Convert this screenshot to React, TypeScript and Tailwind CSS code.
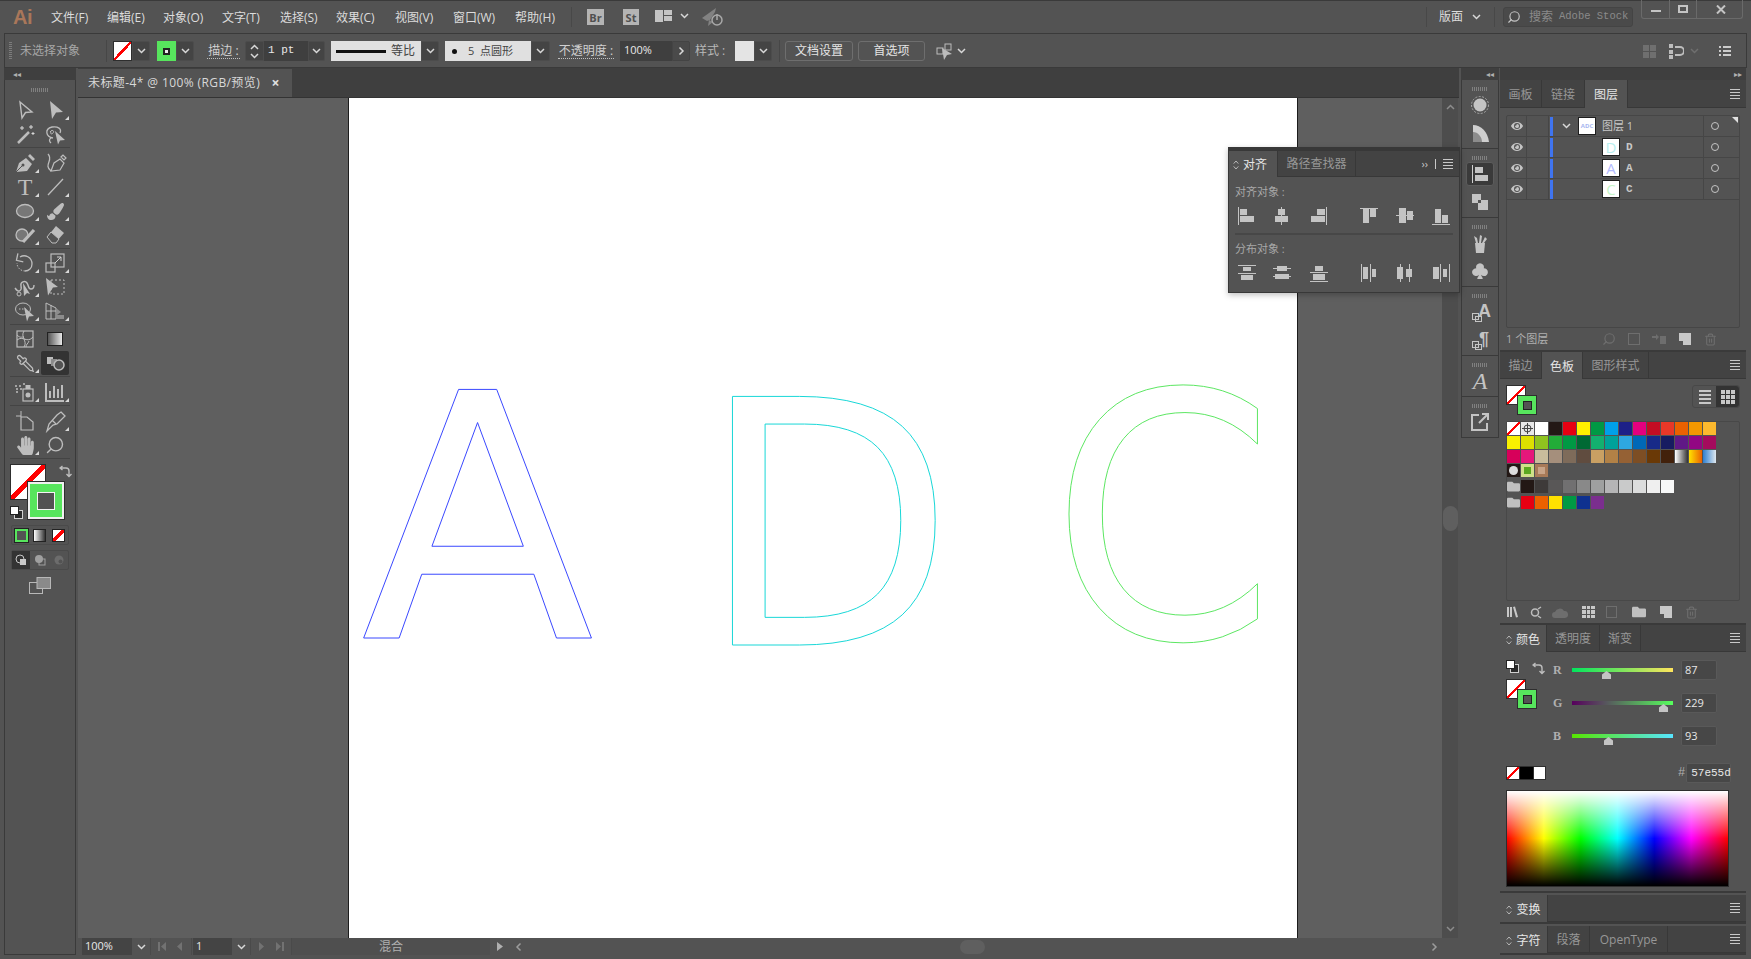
import type { ReactNode } from "react";
import { Pipette, Search, Trash2 } from "lucide-react";
import { FaEye, FaFolder, FaHandPaper, FaPaintBrush } from "react-icons/fa";
import { BsSuitClubFill } from "react-icons/bs";

const ICON = "#bdbdbd";

function Svg({ children, s = 24 }: { children: ReactNode; s?: number }) {
  return (
    <svg width={s} height={s} viewBox={`0 0 ${s} ${s}`} fill="none" stroke="none">
      {children}
    </svg>
  );
}

function Chev({ className = "text-[#d8d8d8]" }: { className?: string }) {
  return (
    <svg width="9" height="6" viewBox="0 0 9 6" className={className}>
      <path d="M1 1l3.500 3.500L8 1" fill="none" stroke="currentColor" strokeWidth="1.500" />
    </svg>
  );
}

function ChevBox({ w = "w-[18px]" }: { w?: string }) {
  return (
    <div className={`${w} h-[20px] flex items-center justify-center bg-[#444444] border border-[#4c4c4c] rounded-r-[2px]`}>
      <Chev />
    </div>
  );
}

function NoneBox({ className }: { className: string }) {
  return <div className={`${className} bg-[linear-gradient(to_bottom_right,#fff_45%,#f00_45%,#f00_55%,#fff_55%)] border border-[#2e2e2e]`} />;
}

function Grip({ w = "w-[16px]" }: { w?: string }) {
  return <div className={`${w} h-[4px] bg-[repeating-linear-gradient(90deg,#808080_0_1px,transparent_1px_2px)]`} />;
}

function MenuLines() {
  return (
    <div className="flex flex-col gap-[2px] w-[10px]">
      <div className="h-px bg-[#c8c8c8]" />
      <div className="h-px bg-[#c8c8c8]" />
      <div className="h-px bg-[#c8c8c8]" />
      <div className="h-px bg-[#c8c8c8]" />
    </div>
  );
}

function UpDown() {
  return (
    <svg width="6" height="10" viewBox="0 0 6 10" className="mr-[4px] shrink-0">
      <path d="M.7 3.600L3 1l2.300 2.600M.7 6.400L3 9l2.300-2.600" fill="none" stroke="#b8b8b8" />
    </svg>
  );
}

type Tab = { label: string; w: string; active?: boolean; grip?: boolean };

function Tabs({ tabs, h = "h-[27px]" }: { tabs: Tab[]; h?: string }) {
  return (
    <div className={`${h} flex shrink-0 bg-[#434343] border-b border-[#383838]`}>
      {tabs.map((t) => (
        <div
          key={t.label}
          className={`${t.w} flex items-center justify-center pt-[2px] border-r border-[#383838] text-[12px] ${
            t.active ? "bg-[#535353] text-[#e6e6e6] -mb-px" : "text-[#979797]"
          }`}
        >
          {t.grip && <UpDown />}
          {t.label}
        </div>
      ))}
      <div className="ml-auto mr-[6px] self-center">
        <MenuLines />
      </div>
    </div>
  );
}

function FillStroke() {
  return (
    <div className="relative w-[31px] h-[30px]">
      <NoneBox className="absolute left-0 top-0 w-[20px] h-[20px]" />
      <div className="absolute left-[11px] top-[10px] w-[20px] h-[20px] bg-[#57e55d] border border-[#2e2e2e] flex items-center justify-center">
        <div className="w-[9px] h-[9px] bg-[#535353] border border-[#222222]" />
      </div>
    </div>
  );
}

function DefaultColors() {
  return (
    <svg width="13" height="13" viewBox="0 0 13 13">
      <rect x="4.500" y="4.500" width="8" height="8" fill="#2a2a2a" stroke="#cfcfcf" />
      <rect x=".5" y=".5" width="8" height="8" fill="#fff" stroke="#222" />
    </svg>
  );
}

function Swap() {
  return (
    <svg width="13" height="13" viewBox="0 0 13 13" fill="none" stroke={ICON} strokeWidth="1.400">
      <path d="M1 3h6c2 0 3 1 3 3v5M3.500 1L1 3l2.500 2M7.500 9l2.500 2.500L12.500 9" />
    </svg>
  );
}

const tool: Record<string, ReactNode> = {
  select: <path d="M7 4l12 10-6.500.5L9 20z" stroke={ICON} strokeWidth="1.400" />,
  direct: <path d="M7 3l13 11-7 .5L9 21z" fill={ICON} />,
  wand: (
    <>
      <path d="M5 21L16 10" stroke={ICON} strokeWidth="2.500" />
      <path d="M9 4v4M7 6h4M18 3v4M16 5h4M20 10v3M18.500 11.500h3" stroke="#d8d8d8" />
    </>
  ),
  lasso: (
    <>
      <path d="M10 16C3 15 1 7 9 5c6-1 10 2 8 6M8 16c-2 1-2 3 0 5" stroke={ICON} strokeWidth="1.300" />
      <path d="M7 10c2-3 5-1 3 1s-3 0-2-1" stroke={ICON} />
      <path d="M12 9l10 9-5 .5-2 4z" fill={ICON} />
    </>
  ),
  pen: (
    <>
      <path d="M3 21l3-9 7-5 6 6-5 7zM15 5l2-2 5 5-2 2z" fill={ICON} />
      <path d="M3 21l6-6" stroke="#535353" />
      <circle cx="10" cy="14" r="1.500" fill="#535353" />
    </>
  ),
  curve: (
    <>
      <path d="M8 20l3-8 6-4 4 4-4 7zM18 6l2-2 3 3-2 2z" fill="none" stroke={ICON} strokeWidth="1.200" />
      <path d="M8 20C0 14 11 9 5 3" stroke={ICON} strokeWidth="1.300" />
    </>
  ),
  line: <path d="M5 20L20 4" stroke={ICON} strokeWidth="1.300" />,
  ellipse: <ellipse cx="12" cy="12" rx="8.500" ry="6.500" fill="#777777" stroke={ICON} strokeWidth="1.300" />,
  shaper: (
    <>
      <circle cx="9" cy="12" r="6" fill="#777777" stroke={ICON} strokeWidth="1.300" />
      <path d="M10 19L21 7" stroke={ICON} strokeWidth="3.200" />
    </>
  ),
  eraser: (
    <>
      <path d="M13 3l8 7-7 8-3 0-6-5z" fill={ICON} />
      <path d="M4 14l4-5 8 7-3 4H9z" fill="#535353" stroke={ICON} />
    </>
  ),
  rotate: (
    <>
      <path d="M7 6c5-3 12 0 12 7 0 4-3 7-7 7" stroke={ICON} strokeWidth="1.300" />
      <path d="M12 20c-4 0-8-3-8-8" stroke={ICON} strokeDasharray="1.500 1.500" />
      <path d="M4 3v7h7" fill="none" stroke={ICON} strokeWidth="1.300" transform="rotate(12 7 7)" />
    </>
  ),
  scale: (
    <>
      <rect x="3" y="12" width="9" height="9" stroke={ICON} strokeWidth="1.200" />
      <rect x="8" y="3" width="13" height="13" stroke={ICON} strokeWidth="1.200" />
      <path d="M12 12l6-6M14 6h4v4" stroke="#d0d0d0" />
    </>
  ),
  warp: (
    <>
      <path d="M2 13c4 6 7 2 6-2s4-6 6-3 1 6 4 6 3-2 3-4" stroke={ICON} strokeWidth="1.400" />
      <circle cx="6" cy="19" r="2" stroke={ICON} />
      <path d="M10 8l7 11-3-1-3 3z" fill={ICON} />
    </>
  ),
  free: (
    <>
      <rect x="8" y="5" width="13" height="14" stroke={ICON} strokeDasharray="2 2" />
      <path d="M3 3l12 9-5 .5-5 8z" fill={ICON} />
    </>
  ),
  builder: (
    <>
      <ellipse cx="10" cy="10" rx="7.500" ry="6" stroke={ICON} />
      <path d="M6 10h7" stroke={ICON} strokeDasharray="1.500 1.500" />
      <path d="M11 8l10 9-5 .5-2 5z" fill={ICON} />
    </>
  ),
  persp: (
    <>
      <path d="M3 4l10 5v11H3zM3 12h10M8 6v14" stroke={ICON} />
      <path d="M13 9l5 4-4 3h7v4h-8z" fill="#8c8c8c" />
    </>
  ),
  mesh: (
    <>
      <rect x="4" y="4" width="16" height="16" stroke={ICON} strokeWidth="1.200" />
      <path d="M4 13c6-5 10 4 16-3M11 4c-4 6 4 10 0 16" stroke={ICON} />
      <path d="M4 8c3 3 4 2 7 2M13 20c0-3 2-3 3-6" stroke={ICON} />
    </>
  ),
  symbol: (
    <>
      <path d="M2 6h2M6 6h2M10 4h2M3 9h2M7 9h2M3 12h2" stroke={ICON} strokeWidth="1.600" />
      <rect x="10" y="9" width="10" height="12" stroke={ICON} strokeWidth="1.200" />
      <rect x="12.500" y="5" width="5" height="4" fill={ICON} />
      <circle cx="15" cy="15" r="2.500" fill={ICON} />
    </>
  ),
  graph: <path d="M3 3v18h18M7 18v-7M11 18V6M15 18V9M19 18V5" stroke={ICON} strokeWidth="2" />,
  artboard: (
    <>
      <path d="M8 2v6M3 7h5" stroke={ICON} />
      <path d="M8 8h6l6 5v8H8z" stroke={ICON} strokeWidth="1.200" />
    </>
  ),
  slice: <path d="M18 3l4 4-8 8-4 1-6 6 2-7 8-9zM9 11l4 4" stroke={ICON} strokeWidth="1.300" />,
};

type ToolDef = { icon: ReactNode; more?: boolean; active?: boolean };

function Tool({ icon, more, active }: ToolDef) {
  return (
    <div className={`relative w-[28px] h-[24px] flex items-center justify-center ${active ? "bg-[#333333] rounded-[2px]" : ""}`}>
      {icon}
      {more && (
        <svg width="4" height="4" viewBox="0 0 4 4" className="absolute right-0 bottom-[2px]">
          <path d="M4 0v4H0z" fill="#d8d8d8" />
        </svg>
      )}
    </div>
  );
}

function TI({ n }: { n: string }) {
  return <Svg>{tool[n]}</Svg>;
}

const toolGroups: ToolDef[][] = [
  [
    { icon: <TI n="select" /> },
    { icon: <TI n="direct" />, more: true },
    { icon: <TI n="wand" /> },
    { icon: <TI n="lasso" /> },
  ],
  [
    { icon: <TI n="pen" />, more: true },
    { icon: <TI n="curve" /> },
    { icon: <span className="font-['Liberation_Serif',serif] text-[24px] leading-none text-[#bdbdbd]">T</span>, more: true },
    { icon: <TI n="line" />, more: true },
    { icon: <TI n="ellipse" />, more: true },
    { icon: <FaPaintBrush size={17} color={ICON} />, more: true },
    { icon: <TI n="shaper" />, more: true },
    { icon: <TI n="eraser" />, more: true },
  ],
  [
    { icon: <TI n="rotate" />, more: true },
    { icon: <TI n="scale" />, more: true },
    { icon: <TI n="warp" />, more: true },
    { icon: <TI n="free" /> },
    { icon: <TI n="builder" />, more: true },
    { icon: <TI n="persp" />, more: true },
  ],
  [
    { icon: <TI n="mesh" /> },
    { icon: <div className="w-[16px] h-[14px] border border-[#222222] bg-[linear-gradient(to_right,#555555,#e8e8e8)]" /> },
    { icon: <Pipette size={19} color={ICON} strokeWidth={1.600} className="-scale-x-100" />, more: true },
    {
      icon: (
        <Svg>
          <rect x="4" y="6" width="6" height="7" fill={ICON} />
          <rect x="8" y="8" width="6" height="7" fill="#8c8c8c" />
          <circle cx="16" cy="14" r="5" stroke={ICON} strokeWidth="1.500" fill="#535353" />
        </Svg>
      ),
      active: true,
    },
  ],
  [
    { icon: <TI n="symbol" />, more: true },
    { icon: <TI n="graph" />, more: true },
  ],
  [
    { icon: <TI n="artboard" /> },
    { icon: <TI n="slice" />, more: true },
    { icon: <FaHandPaper size={19} color={ICON} />, more: true },
    { icon: <Search size={20} color={ICON} strokeWidth={1.700} className="-scale-x-100" /> },
  ],
];

function Toolbar() {
  return (
    <div className="w-[78px] h-full pl-[4px] pr-[2px] pb-[4px] flex flex-col shrink-0">
      <div className="h-[12px] bg-[#3f3f3f] flex items-center pl-[9px]">
        <span className="text-[8px] leading-none text-[#b0b0b0]">◂◂</span>
      </div>
      <div className="flex-1 border-x border-b border-[#3a3a3a] flex flex-col items-center">
        <div className="h-[18px] flex items-center pt-[2px]">
          <Grip w="w-[18px]" />
        </div>
        {toolGroups.map((g, i) => (
          <div
            key={i}
            className={`w-[60px] pb-[1px] border-b border-[#444444] grid grid-cols-2 justify-items-center ${i === 1 || i === 2 || i === 5 ? "mb-[2px]" : "mb-[3px]"}`}
          >
            {g.map((t, j) => (
              <Tool key={j} {...t} />
            ))}
          </div>
        ))}
        <div className="relative w-[56px] h-[56px] mt-[3px] self-start ml-[5px]">
          <NoneBox className="absolute left-0 top-0 w-[36px] h-[36px]" />
          <div className="absolute left-[18px] top-[18px] w-[36px] h-[37px] bg-[#57e55d] border-2 border-[#f0f0f0] outline outline-1 outline-[#2e2e2e] flex items-center justify-center">
            <div className="w-[18px] h-[18px] bg-[#535353] border border-[#f4f4f4]" />
          </div>
          <div className="absolute left-[49px] top-[1px]">
            <Swap />
          </div>
          <div className="absolute left-0 top-[42px]">
            <DefaultColors />
          </div>
        </div>
        <div className="mt-[5px] w-[58px] h-[20px] border border-[#4a4a4a] rounded-[2px] grid grid-cols-3 items-center justify-items-center">
          <div className="w-[13px] h-[13px] bg-[#535353] border-2 border-[#57e55d] outline outline-1 outline-[#222222]" />
          <div className="w-[13px] h-[13px] border border-[#222222] bg-[linear-gradient(to_right,#fff,#333)]" />
          <div className="w-[13px] h-[13px] border border-[#222222] bg-[linear-gradient(to_bottom_right,#fff_38%,#f00_38%,#f00_62%,#fff_62%)]" />
        </div>
        <div className="mt-[5px] w-[58px] h-[20px] border border-[#4a4a4a] rounded-[2px] grid grid-cols-3 items-center justify-items-center">
          <div className="w-[18px] h-[18px] bg-[#333333] flex items-center justify-center">
            <svg width="12" height="12" viewBox="0 0 12 12">
              <circle cx="5" cy="5" r="4" fill="none" stroke="#c8c8c8" />
              <rect x="5" y="5" width="6" height="6" fill="#c8c8c8" />
            </svg>
          </div>
          <svg width="12" height="12" viewBox="0 0 12 12">
            <circle cx="5" cy="5" r="4" fill="#a0a0a0" />
            <rect x="5" y="5" width="6" height="6" fill="none" stroke="#a0a0a0" />
          </svg>
          <svg width="12" height="12" viewBox="0 0 12 12">
            <circle cx="6" cy="6" r="4.500" fill="#6c6c6c" />
            <circle cx="7.500" cy="7.500" r="2" fill="#535353" />
          </svg>
        </div>
        <div className="mt-[7px]">
          <svg width="22" height="17" viewBox="0 0 22 17">
            <rect x=".5" y="5.500" width="13" height="11" fill="none" stroke="#b8b8b8" />
            <rect x="8" y=".5" width="13.500" height="11" fill="#8a8a8a" stroke="#b8b8b8" />
          </svg>
        </div>
      </div>
    </div>
  );
}

const menus: [string, string][] = [
  ["文件(F)", "w-[56px]"],
  ["编辑(E)", "w-[56px]"],
  ["对象(O)", "w-[59px]"],
  ["文字(T)", "w-[58px]"],
  ["选择(S)", "w-[56px]"],
  ["效果(C)", "w-[59px]"],
  ["视图(V)", "w-[58px]"],
  ["窗口(W)", "w-[62px]"],
  ["帮助(H)", "w-[56px]"],
];

function TitleBar() {
  return (
    <div className="h-[33px] flex items-center border-t border-[#3a3a3a] shrink-0">
      <span className="ml-[13px] w-[38px] font-['Liberation_Sans',sans-serif] text-[20px] font-bold tracking-[-0.5px] leading-none text-[#a9775a]">Ai</span>
      {menus.map(([m, w]) => (
        <div key={m} className={`${w} pt-[1px] text-[12px] text-[#dcdcdc] whitespace-nowrap`}>
          {m}
        </div>
      ))}
      <div className="w-px h-[20px] bg-[#484848]" />
      <div className="ml-[15px] w-[17px] h-[16px] bg-[#b4b4b4] text-[#505050] text-[11px] font-bold flex items-center justify-center leading-none">Br</div>
      <div className="ml-[19px] w-[16px] h-[16px] bg-[#b4b4b4] text-[#505050] text-[11px] font-bold flex items-center justify-center leading-none">St</div>
      <div className="ml-[16px] w-[17px] h-[12px] grid grid-cols-[8px_8px] gap-[1px] mb-[3px]">
        <div className="bg-[#c4c4c4]" />
        <div className="flex flex-col gap-[1px]">
          <div className="h-[5px] bg-[#c4c4c4]" />
          <div className="h-[5px] bg-[#c4c4c4]" />
        </div>
      </div>
      <div className="ml-[8px] mb-[3px]">
        <Chev />
      </div>
      <div className="ml-[12px]">
        <svg width="24" height="20" viewBox="0 0 24 20">
          <path d="M1 11L15 1l-1 4-5 8-3 1z" fill="#828282" />
          <path d="M8 13l-1 6 5-4z" fill="#828282" />
          <circle cx="16" cy="13" r="5" fill="none" stroke="#a8a8a8" strokeWidth="1.500" />
          <path d="M16 7v6" stroke="#a8a8a8" strokeWidth="1.500" />
        </svg>
      </div>
      <div className="ml-auto w-px h-[20px] bg-[#484848]" />
      <div className="ml-[12px] text-[12px] text-[#dcdcdc]">版面</div>
      <div className="ml-[9px]">
        <Chev />
      </div>
      <div className="ml-[13px] w-px h-[20px] bg-[#484848]" />
      <div className="ml-[8px] w-[130px] h-[20px] bg-[#4a4a4a] border border-[#444444] rounded-[3px] flex items-center pl-[3px]">
        <Search size={14} color="#c4c4c4" className="-scale-x-100" />
        <span className="ml-[8px] text-[12px] text-[#8a8a8a] whitespace-nowrap">搜索</span>
        <span className="ml-[6px] font-['Liberation_Mono',monospace] text-[10.500px] text-[#8a8a8a] whitespace-nowrap">Adobe Stock</span>
      </div>
      <div className="ml-[8px] mr-[8px] w-[102px] h-[19px] self-start border-x border-b border-[#6a6a6a] rounded-b-[3px] grid grid-cols-[28px_27px_47px] -mt-px">
        <div className="border-r border-[#6a6a6a] flex items-center justify-center">
          <div className="w-[10px] h-[2px] bg-[#c4c4c4] mt-[4px]" />
        </div>
        <div className="border-r border-[#6a6a6a] flex items-center justify-center">
          <div className="w-[10px] h-[8px] border-2 border-[#c4c4c4]" />
        </div>
        <div className="flex items-center justify-center">
          <svg width="10" height="9" viewBox="0 0 10 9">
            <path d="M1 .5l8 8M9 .5l-8 8" stroke="#c4c4c4" strokeWidth="2" />
          </svg>
        </div>
      </div>
    </div>
  );
}

function Dotted({ children, w }: { children: ReactNode; w: string }) {
  return <div className={`${w} text-[12px] leading-[15px] text-[#d0d0d0] border-b border-dotted border-[#c0c0c0] whitespace-nowrap text-center`}>{children}</div>;
}

function ControlBar() {
  return (
    <div className="h-[35px] mx-[4px] pt-[1px] flex items-center border-y border-x border-[#3a3a3a] shrink-0">
      <div className="ml-[4px] w-[3px] h-[18px] bg-[repeating-linear-gradient(180deg,#7c7c7c_0_1px,transparent_1px_2px)]" />
      <div className="ml-[8px] w-[59px] text-[12px] text-[#a6a6a6] whitespace-nowrap">未选择对象</div>
      <div className="ml-[27px] w-px h-[22px] bg-[#474747]" />
      <NoneBox className="ml-[6px] w-[19px] h-[20px]" />
      <ChevBox />
      <div className="ml-[7px] w-[19px] h-[20px] bg-[#57e55d] flex items-center justify-center">
        <div className="w-[7px] h-[7px] bg-[#eeeeee] border-2 border-[#222222]" />
      </div>
      <ChevBox />
      <Dotted w="ml-[13px] w-[33px]">描边 :</Dotted>
      <div className="ml-[5px] w-[19px] h-[20px] bg-[#444444] border border-[#4c4c4c] rounded-l-[2px] flex flex-col items-center justify-center gap-[3px]">
        <Chev className="text-[#d8d8d8] rotate-180" />
        <Chev />
      </div>
      <div className="w-[44px] h-[20px] bg-[#3f3f3f] pl-[4px] font-['Liberation_Mono',monospace] text-[11px] leading-[18px] text-[#e8e8e8]">1 pt</div>
      <ChevBox w="w-[17px]" />
      <div className="ml-[6px] w-[90px] h-[20px] bg-[#e0e0e0] flex items-center pl-[5px] text-[12px] text-[#444444]">
        <div className="w-[50px] h-[3px] bg-[#111111]" />
        <span className="ml-[5px] whitespace-nowrap">等比</span>
      </div>
      <ChevBox />
      <div className="ml-[6px] w-[86px] h-[20px] bg-[#e0e0e0] flex items-center pl-[7px] text-[11px] text-[#444444] whitespace-nowrap">
        <div className="w-[5px] h-[5px] rounded-full bg-[#111111]" />
        <span className="ml-[11px]">5&nbsp; 点圆形</span>
      </div>
      <ChevBox w="w-[19px]" />
      <Dotted w="ml-[8px] w-[56px]">不透明度 :</Dotted>
      <div className="ml-[6px] w-[52px] h-[20px] bg-[#3f3f3f] pl-[4px] text-[11px] leading-[17px] text-[#e8e8e8]">100%</div>
      <div className="w-[18px] h-[20px] bg-[#4a4a4a] border border-[#444444] rounded-r-[2px] flex items-center justify-center">
        <Chev className="text-[#d8d8d8] -rotate-90" />
      </div>
      <div className="ml-[5px] w-[32px] text-[12px] text-[#b8b8b8] whitespace-nowrap">样式 :</div>
      <div className="ml-[8px] w-[19px] h-[20px] bg-[#e4e4e4]" />
      <ChevBox />
      <div className="ml-[7px] w-px h-[22px] bg-[#474747]" />
      <div className="ml-[5px] w-[68px] h-[20px] border border-[#6e6e6e] rounded-[3px] text-[12px] text-[#e4e4e4] flex items-center justify-center">文档设置</div>
      <div className="ml-[5px] w-[67px] h-[20px] border border-[#6e6e6e] rounded-[3px] text-[12px] text-[#e4e4e4] flex items-center justify-center">首选项</div>
      <div className="ml-[11px]">
        <svg width="17" height="17" viewBox="0 0 17 17">
          <rect x="1" y="5" width="6" height="6" fill="none" stroke="#bdbdbd" />
          <rect x="9" y="1" width="6" height="6" fill="none" stroke="#bdbdbd" />
          <path d="M6 5l10 6-5 1-3 5z" fill="#bdbdbd" />
        </svg>
      </div>
      <div className="ml-[4px]">
        <Chev />
      </div>
      <div className="ml-auto grid grid-cols-2 gap-[1px] w-[13px] h-[13px]">
        <div className="bg-[#6f6f6f]" />
        <div className="bg-[#6f6f6f]" />
        <div className="bg-[#6f6f6f]" />
        <div className="bg-[#6f6f6f]" />
      </div>
      <div className="ml-[13px]">
        <svg width="15" height="15" viewBox="0 0 15 15">
          <path d="M0 0h4v4H0zM0 6h4v4H0zM0 11h4v4H0z" fill="#bdbdbd" />
          <path d="M6 3h5a4 4 0 0 1 0 8H6" fill="none" stroke="#bdbdbd" strokeWidth="2" />
        </svg>
      </div>
      <div className="ml-[6px]">
        <Chev className="text-[#6f6f6f]" />
      </div>
      <div className="ml-[20px] mr-[15px] w-[12px] flex flex-col gap-[2px]">
        <div className="h-[2px] bg-[linear-gradient(to_right,#ccc_2px,transparent_2px,transparent_4px,#ccc_4px)]" />
        <div className="h-[2px] bg-[linear-gradient(to_right,#ccc_2px,transparent_2px,transparent_4px,#ccc_4px)]" />
        <div className="h-[2px] bg-[linear-gradient(to_right,#ccc_2px,transparent_2px,transparent_4px,#ccc_4px)]" />
      </div>
    </div>
  );
}

function Artboard() {
  return (
    <div className="relative w-[950px] h-full bg-white border-x border-[#1c1c1c] overflow-hidden font-['DejaVu_Sans',sans-serif] text-[341px] leading-none text-transparent select-none">
      <span className="absolute left-[12px] top-[251px] [-webkit-text-stroke:1px_#3a48ff]">A</span>
      <span className="absolute left-[351px] top-[258px] origin-left scale-x-[0.97] [-webkit-text-stroke:1px_#14d6d6]">D</span>
      <span className="absolute left-[702px] top-[251px] origin-left scale-x-[0.94] [-webkit-text-stroke:1px_#57e55d]">C</span>
    </div>
  );
}

function Doc() {
  return (
    <div className="w-[1381px] h-full flex flex-col shrink-0">
      <div className="h-[30px] bg-[#3f3f3f] flex items-end shrink-0 border-b border-[#333333]">
        <div className="w-[214px] h-[28px] bg-[#535353] flex items-center pl-[10px] text-[12px] tracking-[0.4px] text-[#d8d8d8] whitespace-nowrap">
          未标题-4* @ 100% (RGB/预览)
          <span className="ml-auto mr-[12px] text-[14px] leading-none font-bold text-[#e0e0e0]">×</span>
        </div>
      </div>
      <div className="h-[840px] flex shrink-0">
        <div className="w-[1364px] h-full bg-[#5f5f5f] pl-[270px]">
          <Artboard />
        </div>
        <div className="w-[16px] h-full bg-[#4d4d4d] flex flex-col items-center justify-between py-[6px]">
          <Chev className="text-[#8c8c8c] rotate-180" />
          <div className="w-[15px] h-[25px] rounded-full bg-[#5f5f5f]" />
          <Chev className="text-[#8c8c8c]" />
        </div>
      </div>
      <div className="h-[17px] flex items-center bg-[#535353] shrink-0 text-[11px]">
        <div className="ml-[4px] w-[50px] h-full bg-[#444444] pl-[3px] leading-[16px] text-[#e8e8e8]">100%</div>
        <div className="w-[18px] flex justify-center">
          <Chev />
        </div>
        <NavArrows first />
        <div className="ml-px w-[39px] h-full bg-[#444444] pl-[3px] leading-[16px] text-[#e8e8e8]">1</div>
        <div className="w-[18px] flex justify-center">
          <Chev />
        </div>
        <NavArrows />
        <div className="w-[198px] h-full text-center text-[12px] leading-[17px] text-[#b0b0b0] bg-[#4f4f4f]">混合</div>
        <div className="w-[20px] flex justify-center">
          <svg width="6" height="9" viewBox="0 0 6 9">
            <path d="M0 0l6 4.500L0 9z" fill="#b0b0b0" />
          </svg>
        </div>
        <div className="w-[16px] flex justify-center">
          <Chev className="text-[#9c9c9c] rotate-90" />
        </div>
        <div className="ml-[434px] w-[25px] h-[14px] rounded-full bg-[#5f5f5f]" />
        <div className="ml-[445px]">
          <Chev className="text-[#9c9c9c] -rotate-90" />
        </div>
      </div>
    </div>
  );
}

function NavArrows({ first }: { first?: boolean }) {
  const d = first
    ? ["M0 0h2v9H0zM8 0v9L3 4.500z", "M6 0v9L1 4.500z"]
    : ["M1 0v9l5-4.500z", "M0 0v9l5-4.500zM6 0h2v9H6z"];
  return (
    <div className="w-[42px] flex items-center justify-center gap-[10px] border-x border-[#4a4a4a] h-full">
      {d.map((p) => (
        <svg key={p} width="8" height="9" viewBox="0 0 8 9">
          <path d={p} fill="#727272" />
        </svg>
      ))}
    </div>
  );
}

function DockGroup({ children, h }: { children: ReactNode; h: string }) {
  return (
    <div className={`${h} flex flex-col items-center pt-[7px] border-b border-[#3a3a3a] bg-[#535353]`}>
      <Grip />
      {children}
    </div>
  );
}

function DockIcon({ children, active }: { children: ReactNode; active?: boolean }) {
  return (
    <div className={`w-[28px] h-[24px] my-[2px] flex items-center justify-center ${active ? "bg-[#3a3a3a] border border-[#5c5c5c] rounded-[3px]" : ""}`}>{children}</div>
  );
}

function DockType({ glyph, pos }: { glyph: string; pos: string }) {
  return (
    <span className="relative w-[22px] h-[20px] block">
      <span className={`absolute ${pos} top-0 font-['Liberation_Sans',sans-serif] font-bold text-[18px] leading-none text-[#c4c4c4]`}>{glyph}</span>
      <span className="absolute left-[3px] bottom-[2px] w-[7px] h-[7px] border border-[#c4c4c4]" />
      <span className="absolute left-[6px] bottom-0 w-[7px] h-[6px] border border-[#c4c4c4]" />
    </span>
  );
}

function Dock() {
  return (
    <div className="w-[41px] h-full pl-[2px] flex flex-col shrink-0">
      <div className="h-[12px] bg-[#3f3f3f] flex items-center justify-end pr-[5px] w-[38px]">
        <span className="text-[8px] leading-none text-[#b0b0b0]">◂◂</span>
      </div>
      <div className="w-[38px] border-x border-[#3a3a3a] flex flex-col">
        <DockGroup h="h-[69px]">
          <DockIcon>
            <Svg s={20}>
              <circle cx="10" cy="10" r="6.500" fill="#c4c4c4" />
              <circle cx="10" cy="10" r="8.500" stroke="#a8a8a8" strokeDasharray="2 1.500" />
            </Svg>
          </DockIcon>
          <DockIcon>
            <svg width="18" height="17" viewBox="0 0 18 17">
              <path d="M2 0c8 0 15 7 16 17H2z" fill="#cfcfcf" />
              <path d="M2 17V7c5 0 9 5 9 10z" fill="#8c8c8c" />
            </svg>
          </DockIcon>
        </DockGroup>
        <DockGroup h="h-[69px]">
          <DockIcon active>
            <svg width="16" height="18" viewBox="0 0 16 18">
              <path d="M0 0h1v18H0z" fill="#d0d0d0" />
              <path d="M3 2h8v6H3zM3 10h13v6H3z" fill="#c4c4c4" />
            </svg>
          </DockIcon>
          <DockIcon>
            <svg width="16" height="16" viewBox="0 0 16 16">
              <rect x="0" y="0" width="9" height="9" fill="#c4c4c4" />
              <rect x="6" y="6" width="10" height="10" fill="#c4c4c4" />
              <rect x="6" y="6" width="3" height="3" fill="#535353" />
            </svg>
          </DockIcon>
        </DockGroup>
        <DockGroup h="h-[69px]">
          <DockIcon>
            <svg width="16" height="19" viewBox="0 0 16 19">
              <path d="M3 9h10l-1 10H4z" fill="#c4c4c4" />
              <path d="M4 9L2 2l3 2 1 5zM7 9l1-8 2 1-1 7zM10 9l3-6 2 2-3 4z" fill="#c4c4c4" />
            </svg>
          </DockIcon>
          <DockIcon>
            <BsSuitClubFill size={18} color="#c4c4c4" />
          </DockIcon>
        </DockGroup>
        <DockGroup h="h-[69px]">
          <DockIcon>
            <DockType glyph="A" pos="right-0" />
          </DockIcon>
          <DockIcon>
            <DockType glyph="¶" pos="right-[2px]" />
          </DockIcon>
        </DockGroup>
        <DockGroup h="h-[41px]">
          <DockIcon>
            <span className="font-['Liberation_Serif',serif] italic text-[24px] leading-none text-[#c4c4c4]">A</span>
          </DockIcon>
        </DockGroup>
        <DockGroup h="h-[41px]">
          <DockIcon>
            <svg width="18" height="18" viewBox="0 0 18 18" fill="none" stroke="#c4c4c4" strokeWidth="2">
              <path d="M8 2H1v15h15v-7M8 10l9-9M11 1h6v6" />
            </svg>
          </DockIcon>
        </DockGroup>
      </div>
    </div>
  );
}

function LayerRow({ name, thumb, top }: { name: string; thumb: ReactNode; top?: boolean }) {
  return (
    <div className="h-[21px] grid grid-cols-[20px_22px_155px_1fr] border-b border-[#464646]">
      <div className="flex items-center justify-center border-r border-[#464646]">
        <FaEye size={12} color="#c4c4c4" />
      </div>
      <div className="border-r border-[#464646]" />
      <div className="flex items-center border-r border-[#464646]">
        <div className="ml-px w-[3px] h-[19px] bg-[#3f74f0]" />
        <div className={top ? "ml-[9px] w-[10px]" : "w-[49px]"}>{top && <Chev />}</div>
        <div className={`${top ? "ml-[6px]" : ""} w-[18px] h-[18px] bg-white border border-[#1e1e1e] flex items-center justify-center overflow-hidden`}>{thumb}</div>
        <span className={`ml-[6px] text-[11px] text-[#c8c8c8] whitespace-nowrap ${top ? "" : "font-['Liberation_Mono',monospace] font-bold"}`}>{name}</span>
      </div>
      <div className="flex items-center pl-[7px]">
        <div className="w-[8px] h-[8px] rounded-full border border-[#c4c4c4]" />
      </div>
    </div>
  );
}

function FootIcons({ children }: { children: ReactNode }) {
  return <div className="flex items-center h-[22px] text-[11px] text-[#a8a8a8]">{children}</div>;
}

function NewPage({ dim }: { dim?: boolean }) {
  return (
    <svg width="12" height="12" viewBox="0 0 12 12">
      <path d="M0 0h12v12H4V8H0z" fill={dim ? "#777" : "#c8c8c8"} />
    </svg>
  );
}

function LayersPanel() {
  return (
    <div className="h-[272px] border-b-2 border-[#3a3a3a] flex flex-col">
      <Tabs
        h="h-[28px]"
        tabs={[
          { label: "画板", w: "w-[42px]" },
          { label: "链接", w: "w-[43px]" },
          { label: "图层", w: "w-[43px]", active: true },
        ]}
      />
      <div className="mt-[7px] mx-[6px] h-[215px] border border-[#464646] rounded-[2px] relative">
        <LayerRow
          top
          name="图层 1"
          thumb={<span className="font-['Open_Sans',sans-serif] font-bold text-[6px] leading-none text-[#a8b8f0]">ADC</span>}
        />
        <LayerRow name="D" thumb={<span className="font-['Open_Sans',sans-serif] text-[15px] leading-none text-[#b8efef]">D</span>} />
        <LayerRow name="A" thumb={<span className="font-['Open_Sans',sans-serif] text-[15px] leading-none text-[#b4bcff]">A</span>} />
        <LayerRow name="C" thumb={<span className="font-['Open_Sans',sans-serif] text-[15px] leading-none text-[#c6f5c8]">C</span>} />
        <svg width="6" height="6" viewBox="0 0 6 6" className="absolute right-[1px] top-[1px]">
          <path d="M0 0h6v6z" fill="#e0e0e0" />
        </svg>
      </div>
      <FootIcons>
        <span className="ml-[6px] w-[96px] text-[#b0b0b0]">1 个图层</span>
        <Search size={14} color="#6e6e6e" className="-scale-x-100" />
        <div className="ml-[12px] w-[12px] h-[12px] border border-[#6e6e6e]" />
        <svg width="14" height="12" viewBox="0 0 14 12" className="ml-[12px]">
          <path d="M0 3h4V1l3 3-3 3V5H0zM8 3h6v8H8z" fill="#6e6e6e" />
        </svg>
        <div className="ml-[13px]">
          <NewPage />
        </div>
        <Trash2 size={13} color="#6e6e6e" className="ml-[13px]" />
      </FootIcons>
    </div>
  );
}

const swatchRows: string[][] = [
  ["#ffffff", "#231815", "#e60012", "#fff100", "#009944", "#00a0e9", "#1d2088", "#e4007f", "#c30d23", "#e83828", "#eb6100", "#f39800", "#fcb92e"],
  ["#f9f000", "#dde000", "#8fc31f", "#22ac38", "#009944", "#006934", "#13b06f", "#00a29a", "#2ea7e0", "#0068b7", "#172a88", "#171c61", "#601986", "#920783", "#a40b5d"],
  ["#d7005a", "#e5177b", "#c9bc9c", "#a58f7c", "#7e6b5a", "#604c3f", "#c9a063", "#b28146", "#956134", "#7d4e24", "#6a3906", "#42210b"],
];
const greys = ["#231815", "#3e3a39", "#595757", "#717071", "#898989", "#9fa0a0", "#b5b5b6", "#c9caca", "#dcdddd", "#efefef", "#f7f8f8"];
const brights = ["#e60012", "#eb6100", "#ffe100", "#009944", "#0f318f", "#7b2e8e"];

function Sw({ c }: { c: string }) {
  return <div className="w-[13px] h-[13px]" style={{ backgroundColor: c }} />;
}

function FolderCell() {
  return (
    <div className="w-[13px] h-[13px] flex items-end">
      <FaFolder size={13} color="#c0c0c0" />
    </div>
  );
}

function SwatchesPanel() {
  return (
    <div className="h-[273px] border-b-2 border-[#3a3a3a] flex flex-col">
      <Tabs
        tabs={[
          { label: "描边", w: "w-[42px]" },
          { label: "色板", w: "w-[41px]", active: true },
          { label: "图形样式", w: "w-[66px]" },
        ]}
      />
      <div className="h-[42px] px-[6px] pt-[6px] flex items-start justify-between">
        <FillStroke />
        <div className="w-[48px] h-[23px] border border-[#484848] rounded-[3px] grid grid-cols-2">
          <div className="flex flex-col items-center justify-center gap-[2px]">
            <div className="w-[12px] h-[2px] bg-[#c8c8c8]" />
            <div className="w-[12px] h-[2px] bg-[#c8c8c8]" />
            <div className="w-[12px] h-[2px] bg-[#c8c8c8]" />
            <div className="w-[12px] h-[2px] bg-[#c8c8c8]" />
          </div>
          <div className="bg-[#333333] rounded-r-[3px] flex items-center justify-center">
            <div className="grid grid-cols-3 gap-px">
              {[0, 1, 2, 3, 4, 5, 6, 7, 8].map((i) => (
                <div key={i} className="w-[4px] h-[4px] bg-[#c8c8c8]" />
              ))}
            </div>
          </div>
        </div>
      </div>
      <div className="mx-[6px] h-[181px] border border-[#484848] rounded-[2px] flex flex-col gap-px relative">
        <div className="flex gap-px">
          <NoneBox className="w-[13px] h-[13px] border-0" />
          <div className="w-[13px] h-[13px] bg-[#e8e8e8] flex items-center justify-center">
            <svg width="11" height="11" viewBox="0 0 11 11" fill="none" stroke="#444">
              <circle cx="5.500" cy="5.500" r="3.500" />
              <path d="M5.500 0v11M0 5.500h11" />
            </svg>
          </div>
          {swatchRows[0].map((c, i) => (
            <Sw key={i} c={c} />
          ))}
        </div>
        <div className="flex gap-px">
          {swatchRows[1].map((c, i) => (
            <Sw key={i} c={c} />
          ))}
        </div>
        <div className="flex gap-px">
          {swatchRows[2].map((c, i) => (
            <Sw key={i} c={c} />
          ))}
          <div className="w-[13px] h-[13px] bg-[linear-gradient(to_right,#fff,#333)]" />
          <div className="w-[13px] h-[13px] bg-[linear-gradient(to_right,#ffe100,#eb6100)]" />
          <div className="w-[13px] h-[13px] bg-[linear-gradient(to_right,#2e7fd0,#dfe8ef)]" />
        </div>
        <div className="flex gap-px">
          <div className="w-[13px] h-[13px] bg-[#231815] flex items-center justify-center">
            <div className="w-[9px] h-[9px] rounded-full bg-[#dcdcdc]" />
          </div>
          <div className="w-[13px] h-[13px] bg-[#cfe08a] flex items-center justify-center">
            <div className="w-[7px] h-[7px] bg-[#5aa820]" />
          </div>
          <div className="w-[13px] h-[13px] bg-[#a87a58] flex items-center justify-center">
            <div className="w-[7px] h-[7px] bg-[#c8a488]" />
          </div>
        </div>
        <div className="flex gap-px mt-[2px]">
          <FolderCell />
          {greys.map((c) => (
            <Sw key={c} c={c} />
          ))}
        </div>
        <div className="flex gap-px mt-[2px]">
          <FolderCell />
          {brights.map((c) => (
            <Sw key={c} c={c} />
          ))}
        </div>
      </div>
      <FootIcons>
        <svg width="14" height="12" viewBox="0 0 14 12" className="ml-[7px]">
          <path d="M0 1h2v10H0zM3 1h2v10H3zM6 1l2-.5 3 10.500-2 .5z" fill="#c8c8c8" />
        </svg>
        <svg width="13" height="13" viewBox="0 0 13 13" fill="none" stroke="#bdbdbd" strokeWidth="1.500" className="ml-[9px]">
          <circle cx="5" cy="6.500" r="3.500" />
          <path d="M8 3l3-2M8 10l3 2" />
        </svg>
        <svg width="18" height="11" viewBox="0 0 18 11" className="ml-[8px]">
          <path d="M4 11a3 3 0 0 1 0-6 5 5 0 0 1 9-1 3.500 3.500 0 0 1 1 7z" fill="#6e6e6e" />
        </svg>
        <div className="ml-[13px] w-[13px] h-[12px] grid grid-cols-3 gap-px">
          {[0, 1, 2, 3, 4, 5, 6, 7, 8].map((i) => (
            <div key={i} className="bg-[#c8c8c8]" />
          ))}
        </div>
        <div className="ml-[11px] w-[11px] h-[12px] border border-[#6e6e6e]" />
        <div className="ml-[15px]">
          <FaFolder size={14} color="#c0c0c0" />
        </div>
        <div className="ml-[14px]">
          <NewPage />
        </div>
        <Trash2 size={13} color="#6e6e6e" className="ml-[13px]" />
      </FootIcons>
    </div>
  );
}

function Thumb({ pos }: { pos: string }) {
  return (
    <svg width="9" height="8" viewBox="0 0 9 8" className={`absolute top-[3px] ${pos}`}>
      <path d="M4.500 0L9 3.500V8H0V3.500z" fill="#c4c4c4" />
    </svg>
  );
}

function SliderRow({ label, bar, pos, value }: { label: string; bar: string; pos: string; value: string }) {
  return (
    <div className="h-[20px] flex items-center">
      <span className="w-[19px] font-['Liberation_Serif',serif] font-bold text-[12px] text-[#b0b0b0]">{label}</span>
      <div className={`relative w-[101px] h-[4px] ${bar}`}>
        <Thumb pos={pos} />
      </div>
      <div className="ml-[8px] w-[36px] h-[20px] bg-[#474747] border border-[#595959] rounded-[2px] pl-[3px] text-[11px] leading-[17px] text-[#e8e8e8]">{value}</div>
    </div>
  );
}

function ColorPanel() {
  return (
    <div className="h-[268px] border-b-2 border-[#3a3a3a] flex flex-col">
      <Tabs
        tabs={[
          { label: "颜色", w: "w-[47px]", active: true, grip: true },
          { label: "透明度", w: "w-[53px]" },
          { label: "渐变", w: "w-[41px]" },
        ]}
      />
      <div className="h-[108px] flex pt-[8px] pl-[6px]">
        <div className="w-[47px]">
          <div className="flex items-start gap-[13px]">
            <DefaultColors />
            <div className="mt-[2px]">
              <Swap />
            </div>
          </div>
          <div className="mt-[4px]">
            <FillStroke />
          </div>
        </div>
        <div className="flex flex-col gap-[13px]">
          <SliderRow label="R" value="87" pos="left-[30px]" bar="bg-[linear-gradient(to_right,#00e55d,#ffe55d)]" />
          <SliderRow label="G" value="229" pos="left-[87px]" bar="bg-[linear-gradient(to_right,#57005d,#57ff5d)]" />
          <SliderRow label="B" value="93" pos="left-[32px]" bar="bg-[linear-gradient(to_right,#57e500,#57e5ff)]" />
        </div>
      </div>
      <div className="h-[26px] flex items-center pl-[6px]">
        <NoneBox className="w-[14px] h-[14px]" />
        <div className="w-[13px] h-[14px] bg-black border-y border-[#2e2e2e]" />
        <div className="w-[13px] h-[14px] bg-white border border-[#2e2e2e]" />
        <span className="ml-[132px] font-['Liberation_Mono',monospace] text-[12px] text-[#b0b0b0]">#</span>
        <div className="ml-[1px] w-[45px] h-[20px] bg-[#474747] border border-[#595959] rounded-[2px] pl-[4px] font-['Liberation_Mono',monospace] text-[11px] leading-[18px] text-[#e8e8e8]">57e55d</div>
      </div>
      <div className="ml-[6px] mt-[4px] w-[223px] h-[97px] border border-[#2e2e2e] bg-[linear-gradient(to_bottom,#fff_0%,transparent_50%,transparent_50%,#000_100%),linear-gradient(to_right,#f00,#ff0,#0f0,#0ff,#00f,#f0f,#f00)]" />
    </div>
  );
}

function CollapsedPanel({ tabs }: { tabs: Tab[] }) {
  return (
    <div className="h-[31px] flex flex-col justify-start pt-[2px] border-b-2 border-[#3a3a3a]">
      <Tabs tabs={tabs} />
    </div>
  );
}

function Panels() {
  return (
    <div className="w-[246px] h-full flex flex-col shrink-0">
      <div className="h-[12px] bg-[#3f3f3f] flex items-center justify-end pr-[4px]">
        <span className="text-[8px] leading-none text-[#b0b0b0]">▸▸</span>
      </div>
      <LayersPanel />
      <SwatchesPanel />
      <ColorPanel />
      <CollapsedPanel tabs={[{ label: "变换", w: "w-[48px]", active: true, grip: true }]} />
      <CollapsedPanel
        tabs={[
          { label: "字符", w: "w-[48px]", active: true, grip: true },
          { label: "段落", w: "w-[42px]" },
          { label: "OpenType", w: "w-[78px]" },
        ]}
      />
    </div>
  );
}

type Rect = [number, number, number, number];

function AlignIcon({ r }: { r: Rect[] }) {
  return (
    <svg width="20" height="20" viewBox="0 0 20 20">
      {r.map(([x, y, w, h], i) => (
        <rect key={i} x={x} y={y} width={w} height={h} fill="#c4c4c4" />
      ))}
    </svg>
  );
}

const alignTop: Rect[][] = [
  [[1, 1, 1, 18], [3, 3, 7, 6], [3, 10, 14, 6]],
  [[9, 1, 1, 18], [6, 3, 7, 6], [3, 10, 13, 6]],
  [[17, 1, 1, 18], [8, 3, 8, 6], [2, 10, 14, 6]],
  [[1, 2, 18, 1], [4, 3, 6, 14], [11, 3, 6, 8]],
  [[1, 9, 18, 1], [4, 2, 7, 15], [12, 5, 6, 9]],
  [[1, 18, 18, 1], [4, 3, 6, 14], [11, 9, 6, 8]],
];
const alignBottom: Rect[][] = [
  [[1, 2, 18, 1], [6, 4, 8, 4], [1, 10, 18, 1], [4, 12, 12, 5]],
  [[1, 5, 18, 1], [5, 3, 10, 5], [1, 13, 18, 1], [3, 11, 14, 5]],
  [[1, 18, 18, 1], [4, 11, 12, 6], [1, 9, 18, 1], [6, 3, 8, 5]],
  [[2, 1, 1, 18], [4, 4, 5, 12], [11, 1, 1, 18], [13, 6, 4, 8]],
  [[5, 1, 1, 18], [2, 4, 6, 12], [14, 1, 1, 18], [11, 6, 6, 8]],
  [[9, 1, 1, 18], [2, 4, 6, 12], [18, 1, 1, 18], [12, 6, 4, 8]],
];
const alignWidths = ["w-[35px]", "w-[37px]", "w-[50px]", "w-[36px]", "w-[36px]", "w-[20px]"];

function AlignRow({ rows }: { rows: Rect[][] }) {
  return (
    <div className="flex pl-[8px]">
      {rows.map((r, i) => (
        <div key={i} className={alignWidths[i]}>
          <AlignIcon r={r} />
        </div>
      ))}
    </div>
  );
}

function AlignPanel() {
  return (
    <div className="absolute left-[1228px] top-[147px] w-[232px] h-[146px] bg-[#535353] border border-[#383838] border-t-[4px] shadow-[0_2px_6px_rgba(0,0,0,0.25)]">
      <div className="h-[26px] flex bg-[#434343] border-b border-[#383838]">
        <div className="w-[49px] bg-[#535353] border-r border-[#383838] -mb-px flex items-center pl-[4px] pt-[1px] text-[12px] text-[#e6e6e6]">
          <UpDown />
          对齐
        </div>
        <div className="w-[78px] border-r border-[#383838] flex items-center justify-center pt-[1px] text-[12px] text-[#979797]">路径查找器</div>
        <div className="ml-auto mr-[6px] flex items-center gap-[7px] text-[#c8c8c8]">
          <span className="text-[11px] leading-none">››</span>
          <div className="w-px h-[10px] bg-[#c8c8c8]" />
          <MenuLines />
        </div>
      </div>
      <div className="pl-[6px] pt-[7px] text-[11px] leading-[16px] text-[#a8a8a8]">对齐对象 :</div>
      <div className="mt-[6px]">
        <AlignRow rows={alignTop} />
      </div>
      <div className="mx-[6px] mt-[7px] h-[2px] bg-[#474747]" />
      <div className="pl-[6px] pt-[6px] text-[11px] leading-[16px] text-[#a8a8a8]">分布对象 :</div>
      <div className="mt-[6px]">
        <AlignRow rows={alignBottom} />
      </div>
    </div>
  );
}

export default function App() {
  return (
    <div className="relative w-[1751px] h-[959px] bg-[#535353] overflow-hidden flex flex-col font-['Open_Sans','Noto_Sans_CJK_SC',sans-serif]">
      <TitleBar />
      <ControlBar />
      <div className="h-[891px] flex">
        <Toolbar />
        <Doc />
        <Dock />
        <Panels />
      </div>
      <AlignPanel />
    </div>
  );
}
